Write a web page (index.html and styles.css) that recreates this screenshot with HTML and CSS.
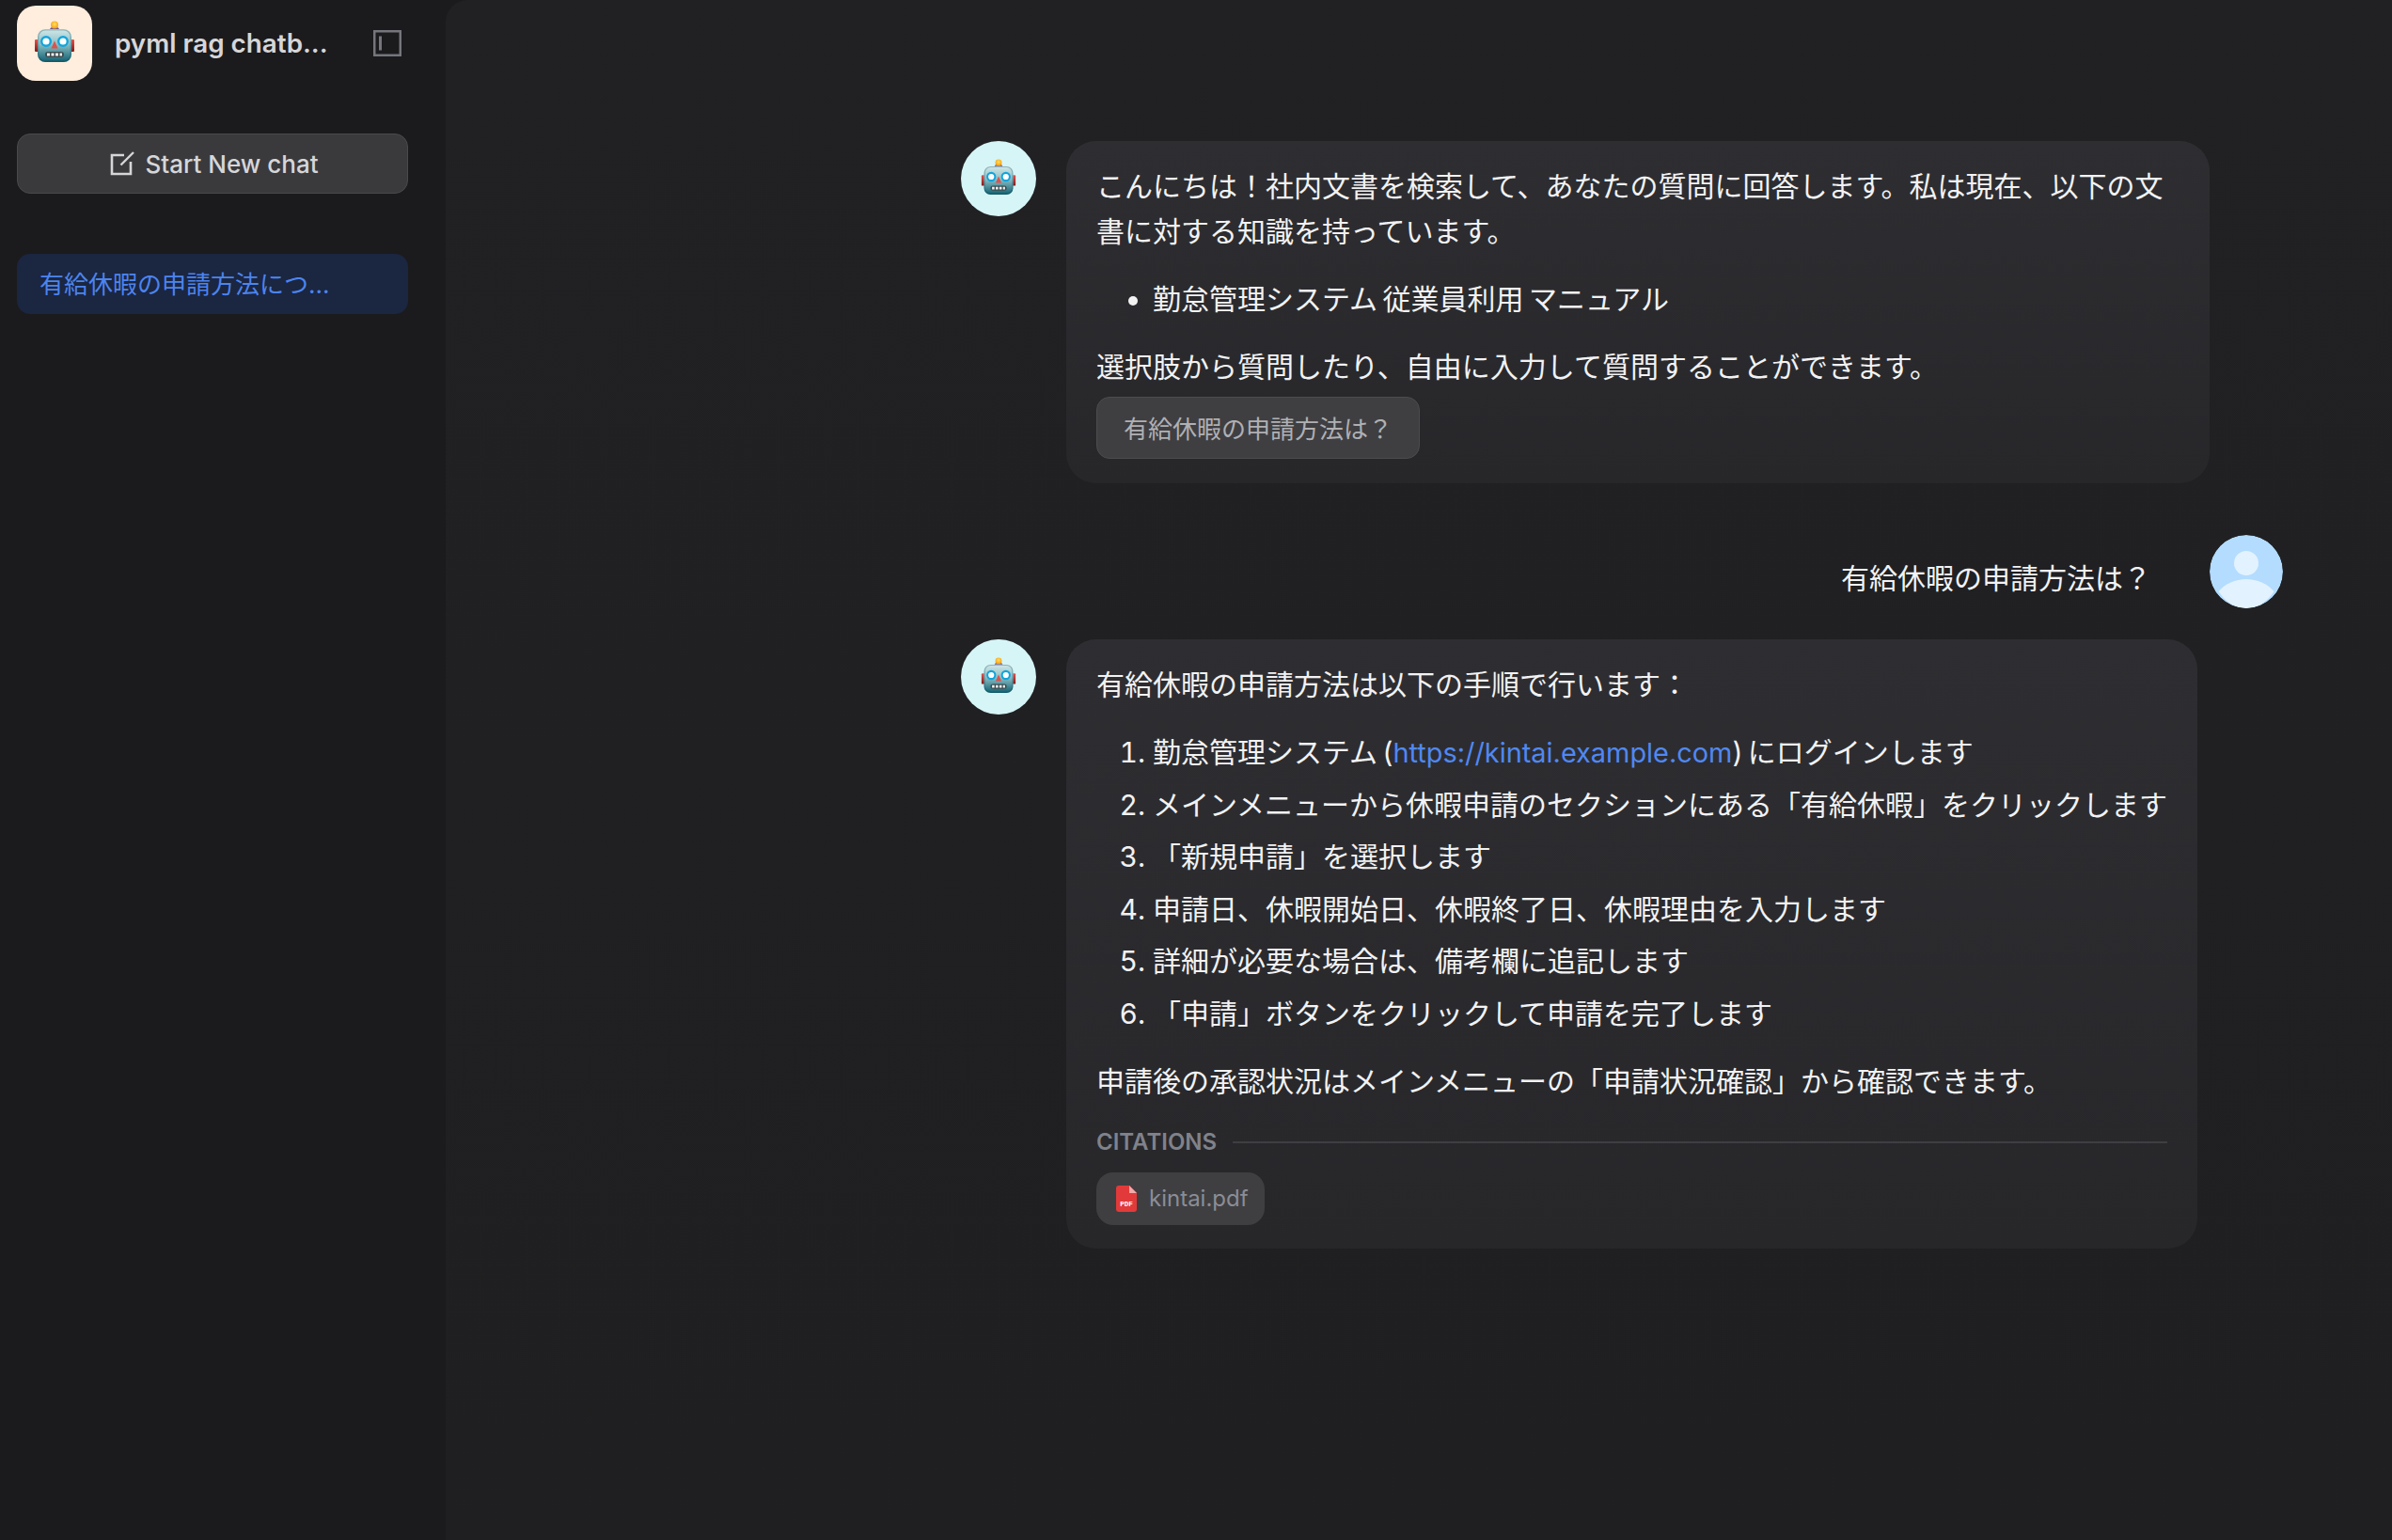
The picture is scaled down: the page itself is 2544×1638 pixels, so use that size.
FILE: index.html
```html
<!DOCTYPE html>
<html lang="ja">
<head>
    <meta charset="UTF-8">
    <title>pyml rag chatbot</title>
    <link rel="stylesheet" href="styles.css">
</head>
<body>
    <svg class="defs" width="0" height="0">
        <defs>
            <linearGradient id="head" x1="0" y1="0" x2="0" y2="1">
                <stop offset="0" stop-color="#d3e8e8"/>
                <stop offset="0.45" stop-color="#8dc0c6"/>
                <stop offset="1" stop-color="#0f5f70"/>
            </linearGradient>
            <linearGradient id="ear" x1="0" y1="0" x2="0" y2="1">
                <stop offset="0" stop-color="#e0534f"/>
                <stop offset="1" stop-color="#7c1c1c"/>
            </linearGradient>
            <radialGradient id="bulb" cx="0.5" cy="0.4" r="0.6">
                <stop offset="0" stop-color="#ffe25a"/>
                <stop offset="1" stop-color="#f59a12"/>
            </radialGradient>
            <symbol id="robot" viewBox="0 0 44 44">
                <rect x="1" y="20" width="4" height="13" rx="1" fill="url(#ear)"/>
                <rect x="39" y="20" width="4" height="13" rx="1" fill="url(#ear)"/>
                <path d="M17 9.5c0-2 2.2-3 5-3s5 1 5 3v1H17z" fill="#6d5a9e"/>
                <circle cx="22" cy="4.5" r="4" fill="url(#bulb)"/>
                <rect x="4" y="9" width="36" height="35" rx="8" fill="url(#head)"/>
                <rect x="4.8" y="9.8" width="34.4" height="33.4" rx="7.4" fill="none" stroke="#0b4452" stroke-opacity=".3" stroke-width="1.2"/>
                <circle cx="13" cy="22" r="4.8" fill="#fff" stroke="#13a4dc" stroke-width="2.4"/>
                <circle cx="31" cy="22" r="4.8" fill="#fff" stroke="#13a4dc" stroke-width="2.4"/>
                <path d="M22 21.5l3.6 8h-7.2z" fill="#d9534f"/>
                <rect x="12" y="33" width="20" height="6" rx="3" fill="#3c4c50"/>
                <path d="M14 34.5h3v3h-3zM18.5 34.5h3v3h-3zM23 34.5h3v3h-3zM27.500 34.5h2.500v3h-2.500z" fill="#eef2f2"/>
            </symbol>
        </defs>
    </svg>

    <div class="app">
        <aside class="sidebar">
            <div class="brand">
                <div class="logo"><svg class="logo-robot"><use href="#robot"/></svg></div>
                <span class="brand-name">pyml rag chatb...</span>
                <svg class="panel-icon" viewBox="0 0 30 28">
                    <rect x="1.250" y="1.250" width="27.500" height="25.500" fill="none" stroke="#75767c" stroke-width="2.500"/>
                    <path d="M7.500 6.500v15" stroke="#75767c" stroke-width="3"/>
                </svg>
            </div>
            <button class="new-chat">
                <svg class="new-icon" viewBox="0 0 26 26">
                    <path d="M15 4H2v20h20V11" fill="none" stroke="#d6d6d8" stroke-width="2.600"/>
                    <path d="M11.500 14.500L25 1" fill="none" stroke="#d6d6d8" stroke-width="2.400"/>
                </svg>
                Start New chat
            </button>
            <div class="thread">有給休暇の申請方法につ...</div>
        </aside>

        <main class="main">
            <div class="messages">
                <div class="msg">
                    <div class="avatar bot"><svg class="bot-robot"><use href="#robot"/></svg></div>
                    <div class="bubble first">
                        <p>こんにちは！社内文書を検索して、あなたの質問に回答します。私は現在、以下の文書に対する知識を持っています。</p>
                        <ul>
                            <li><span class="tight">勤怠管理システム 従業員利用 マニュアル</span></li>
                        </ul>
                        <p>選択肢から質問したり、自由に入力して質問することができます。</p>
                        <button class="suggest">有給休暇の申請方法は？</button>
                    </div>
                </div>

                <div class="msg user">
                    <div class="user-text">有給休暇の申請方法は？</div>
                    <svg class="avatar user-avatar" viewBox="0 0 78 78">
                        <circle cx="39" cy="39" r="39" fill="#b3dcff"/>
                        <circle cx="39" cy="30" r="13" fill="#e3f2ff"/>
                        <path d="M9.500 60c7-8 18-13 29.500-13s22.500 5 29.500 13c-7 11-18 18-29.500 18S16.500 71 9.500 60z" fill="#e3f2ff"/>
                    </svg>
                </div>

                <div class="msg">
                    <div class="avatar bot"><svg class="bot-robot"><use href="#robot"/></svg></div>
                    <div class="bubble">
                        <p>有給休暇の申請方法は以下の手順で行います：</p>
                        <ol>
                            <li><span class="tight">勤怠管理システム (<a href="#">https://kintai.example.com</a>) にログインします</span></li>
                            <li>メインメニューから休暇申請のセクションにある「有給休暇」をクリックします</li>
                            <li>「新規申請」を選択します</li>
                            <li>申請日、休暇開始日、休暇終了日、休暇理由を入力します</li>
                            <li>詳細が必要な場合は、備考欄に追記します</li>
                            <li>「申請」ボタンをクリックして申請を完了します</li>
                        </ol>
                        <p>申請後の承認状況はメインメニューの「申請状況確認」から確認できます。</p>
                        <div class="citations">
                            <span>CITATIONS</span>
                            <div class="rule"></div>
                        </div>
                        <div class="file">
                            <svg class="pdf-icon" viewBox="0 0 22 28">
                                <path d="M3 0h11l8 8v17a3 3 0 0 1-3 3H3a3 3 0 0 1-3-3V3a3 3 0 0 1 3-3z" fill="#e23a3a"/>
                                <path d="M14 0l8 8h-8z" fill="#f5a9a9"/>
                                <text class="pdf-label" x="11" y="21.500" text-anchor="middle">PDF</text>
                            </svg>
                            kintai.pdf
                        </div>
                    </div>
                </div>
            </div>
        </main>
    </div>
</body>
</html>
```

FILE: styles.css
```css
*{
    box-sizing:border-box;
}
html,body{
    margin:0;
    padding:0;
    height:100%;
}
body{
    background-color:#1b1b1d;
    color:#f2f2f3;
    font:30px/48px Inter,"Noto Sans CJK JP",sans-serif;
}
.defs{
    display:block;
}
.app{
    display:flex;
    height:1638px;
}

/* sidebar */
.sidebar{
    width:474px;
    flex:none;
    padding:6px 40px 0 18px;
}
.brand{
    display:flex;
    align-items:center;
    height:80px;
}
.logo{
    width:80px;
    height:80px;
    padding-bottom:5px;
    border-radius:20px;
    background-color:#ffeddd;
    display:flex;
    align-items:center;
    justify-content:center;
}
.logo-robot{
    width:44px;
    height:44px;
}
.brand-name{
    margin-left:24px;
    font-size:27.800px;
    font-weight:600;
    color:#d6d6d9;
    white-space:nowrap;
}
.panel-icon{
    width:30px;
    height:28px;
    margin-left:auto;
    margin-right:7px;
}
.new-chat{
    display:flex;
    align-items:center;
    justify-content:center;
    gap:11px;
    width:100%;
    height:64px;
    margin-top:56px;
    padding-left:10px;
    background-color:#3a3a3d;
    border:1px solid #4a4a4d;
    border-radius:14px;
    color:#d6d6d8;
    font:500 26px Inter,sans-serif;
}
.new-icon{
    width:26px;
    height:26px;
}
.thread{
    margin-top:64px;
    height:64px;
    padding-left:24px;
    border-radius:14px;
    background-color:#1b2640;
    color:#4c84ee;
    font-size:26px;
    line-height:66px;
}

/* chat */
.main{
    flex:1;
    min-width:0;
    background:linear-gradient(#212124,#1f1f21);
    border-top-left-radius:24px;
    padding:150px 116px 0 548px;
}
.messages{
    display:flex;
    flex-direction:column;
}
.msg{
    display:flex;
    align-items:flex-start;
    gap:32px;
}
.avatar{
    width:80px;
    height:80px;
    border-radius:50%;
    flex:none;
}
.bot{
    padding-bottom:4px;
    background-color:#d6f5f7;
    display:flex;
    align-items:center;
    justify-content:center;
}
.bot-robot{
    width:38px;
    height:38px;
}
.bubble{
    max-width:1216px;
    padding:24px 32px 25px;
    background:linear-gradient(#2e2e32,#27272a);
    border-radius:32px;
}
.bubble.first{
    width:1216px;
    padding-bottom:26px;
}
.bubble p{
    margin:0;
}
.bubble ul{
    margin:24px 0;
    padding-left:60px;
}
.bubble ol{
    margin:21px 0 20px;
    padding-left:60px;
}
.bubble ol li{
    line-height:55.500px;
}
.tight{
    word-spacing:-3px;
}
.suggest{
    display:block;
    width:344px;
    height:66px;
    margin-top:8px;
    padding-bottom:3px;
    background-color:#3f3f42;
    border:1px solid #4c4c4f;
    border-radius:14px;
    color:#b0b0b3;
    font:26px "Noto Sans CJK JP",sans-serif;
}
a{
    color:#5088f2;
    font-size:28.900px;
    text-decoration:none;
}
.msg.user{
    margin:55px 0 33px;
    justify-content:flex-end;
    gap:62px;
}
.user-text{
    padding-top:22px;
}
.user-avatar{
    width:78px;
    height:78px;
}
.citations{
    display:flex;
    align-items:center;
    gap:17px;
    margin-top:24px;
    color:#80828b;
    font-size:24px;
    font-weight:600;
    line-height:34px;
}
.rule{
    flex:1;
    height:2px;
    background-color:#3e3f42;
}
.file{
    display:inline-flex;
    align-items:center;
    gap:13px;
    height:56px;
    margin-top:15px;
    padding:0 17px 0 21px;
    background-color:#3f3f42;
    border-radius:18px;
    color:#8b8d95;
    font-size:24px;
}
.pdf-icon{
    width:22px;
    height:28px;
}
.pdf-label{
    fill:#fff;
    font:700 7.500px "Liberation Mono",monospace;
}
```
